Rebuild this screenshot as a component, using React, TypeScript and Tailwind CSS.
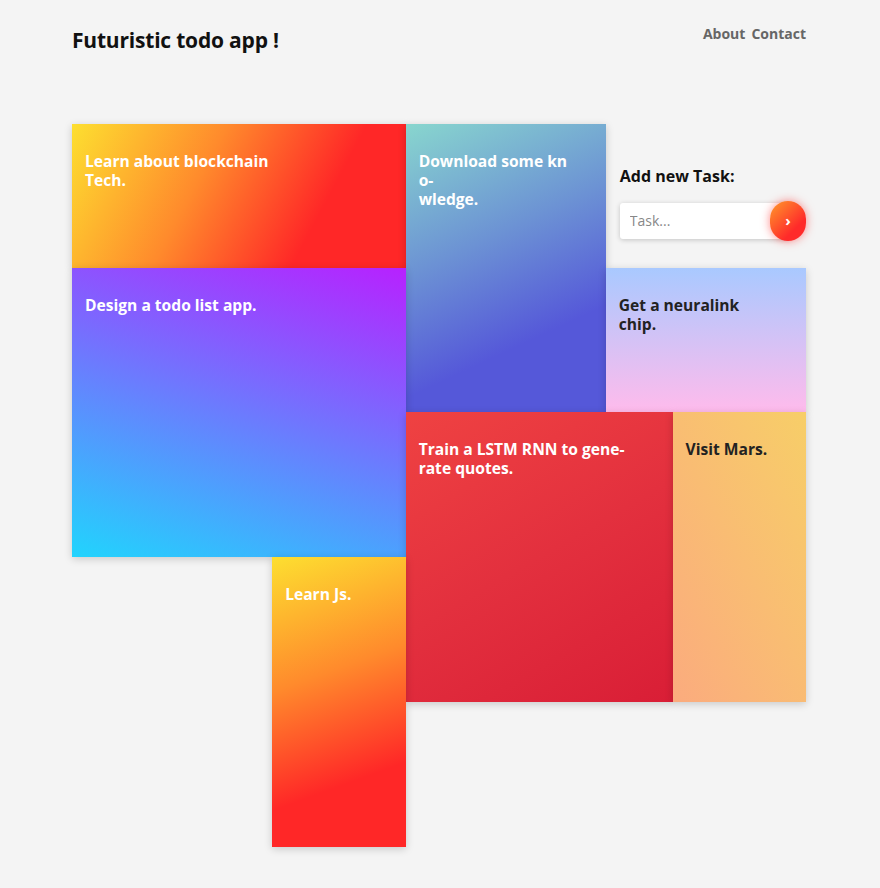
import { useState } from "react";

type Task = {
  id: number
  lines: string[]
  area: string
  bg: string
  dark?: boolean
}

const tasks: Task[] = [
  {
    id: 1,
    lines: ["Learn about blockchain", "Tech."],
    area: "col-start-1 col-span-5 row-start-1",
    bg: "bg-[linear-gradient(118deg,#fddf30_0%,#ff8a2c_38%,#ff2727_72%,#ff2727_100%)]",
  },
  {
    id: 2,
    lines: ["Download some kn", "o-", "wledge."],
    area: "col-start-6 col-span-3 row-start-1 row-span-2",
    bg: "bg-[linear-gradient(155deg,#88d6ce_0%,#6c92d4_40%,#5558d9_72%,#5558d9_100%)]",
  },
  {
    id: 3,
    lines: ["Design a todo list app."],
    area: "col-start-1 col-span-5 row-start-2 row-span-2",
    bg: "bg-[linear-gradient(19deg,#21d4fd_0%,#b721ff_100%)]",
  },
  {
    id: 4,
    lines: ["Get a neuralink", "chip."],
    area: "col-start-9 col-span-3 row-start-2",
    bg: "bg-[linear-gradient(180deg,#a9c9ff_0%,#ffbbec_100%)]",
    dark: true,
  },
  {
    id: 5,
    lines: ["Train a LSTM RNN to gene-", "rate quotes."],
    area: "col-start-6 col-span-4 row-start-3 row-span-2",
    bg: "bg-[linear-gradient(150deg,#ef4242_0%,#e3303e_50%,#d91e36_100%)]",
  },
  {
    id: 6,
    lines: ["Visit Mars."],
    area: "col-start-10 col-span-2 row-start-3 row-span-2",
    bg: "bg-[linear-gradient(62deg,#fbab7e_0%,#f7ce68_100%)]",
    dark: true,
  },
  {
    id: 7,
    lines: ["Learn Js."],
    area: "col-start-4 col-span-2 row-start-4 row-span-2",
    bg: "bg-[linear-gradient(160deg,#fddf30_0%,#ff8a2c_40%,#ff2727_75%,#ff2727_100%)]",
  },
]

function TaskCard({ task }: { task: Task }) {
  return (
    <div className={`${task.area} ${task.bg} shadow-[0_2px_8px_rgba(0,0,0,0.18)] pl-[13px] pt-[28px]`}>
      <p className={`text-[15.6px] font-bold leading-[19px] ${task.dark ? "text-[#222]" : "text-white"}`}>
        {task.lines.map((line, i) => (
          <span key={i} className="block whitespace-nowrap">{line}</span>
        ))}
      </p>
    </div>
  )
}

export default function App() {
  const [value, setValue] = useState("")

  return (
    <div className="min-h-[888px] bg-[#f4f4f4] font-['Open_Sans',sans-serif] text-[#111]">
      <header className="flex items-start justify-between pl-[72px] pr-[74px] pt-[25px]">
        <h1 className="text-[21px] font-bold tracking-[-0.2px]">Futuristic todo app !</h1>
        <nav className="-mt-[2px] flex gap-[6px] text-[14px] font-bold text-[#666]">
          <a>About</a>
          <a>Contact</a>
        </nav>
      </header>

      <main className="pl-[72px] pt-[67px]">
        <div className="grid w-[734px] grid-cols-11 grid-rows-[144px_144px_145px_145px_145px]">
          {tasks.map((task) => (
            <TaskCard key={task.id} task={task} />
          ))}

          <div className="col-start-9 col-span-3 row-start-1 pl-[14px] pt-[40px]">
            <p className="text-[16px] font-bold">Add new Task:</p>
            <div className="mt-[13px] flex items-center">
              <input
                value={value}
                onChange={(e) => setValue(e.target.value)}
                placeholder="Task..."
                className="h-[36px] w-[170px] rounded-[3px] bg-white px-[10px] text-[14px] shadow-[0_1px_5px_rgba(0,0,0,0.2)] outline-none placeholder:text-[#888]"
              />
              <button className="-ml-[20px] flex h-[40px] w-[40px] items-center justify-center rounded-full bg-[linear-gradient(135deg,#ff9a2c_0%,#ff2a2a_70%)] text-[15px] font-bold text-white shadow-[0_0_10px_rgba(255,40,40,0.55)]">
                ›
              </button>
            </div>
          </div>
        </div>
      </main>
    </div>
  )
}
